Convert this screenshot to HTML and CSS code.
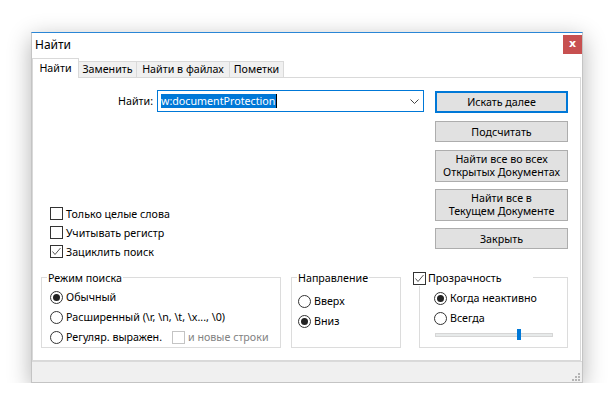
FILE: index.html
```html
<!DOCTYPE html>
<html lang="ru">
<head>
<meta charset="utf-8">
<title>Найти</title>
<link rel="stylesheet" href="styles.css">
</head>
<body>
<div class="window">
  <div class="titlebar">
    <span class="title">Найти</span>
    <div class="close">x</div>
  </div>
  <div class="tabs">
    <div class="tab active t1">Найти</div>
    <div class="tab t2">Заменить</div>
    <div class="tab t3">Найти в файлах</div>
    <div class="tab t4">Пометки</div>
  </div>
  <div class="panel">
    <div class="top">
      <div class="left">
        <div class="find-row">
          <span class="find-label">Найти:</span>
          <div class="combo">
            <span class="sel">w:documentProtection</span><span class="caret"></span>
            <svg class="chev" width="9" height="5" viewBox="0 0 9 5"><polyline points="0.5,0.5 4.5,4.5 8.5,0.5" fill="none" stroke="#444" stroke-width="1"/></svg>
          </div>
        </div>
        <div class="checks">
          <div class="opt"><span class="cb"></span>Только целые слова</div>
          <div class="opt"><span class="cb"></span>Учитывать регистр</div>
          <div class="opt"><span class="cb"><svg width="11" height="11" viewBox="0 0 11 11"><polyline points="1.5,5.5 4,8.5 9.5,2" fill="none" stroke="#555" stroke-width="1"/></svg></span>Зациклить поиск</div>
        </div>
      </div>
      <div class="buttons">
        <div class="btn default">Искать далее</div>
        <div class="btn">Подсчитать</div>
        <div class="btn tall"><span class="line">Найти все во всех</span><span class="line">Открытых Документах</span></div>
        <div class="btn tall"><span class="line">Найти все в</span><span class="line">Текущем Документе</span></div>
        <div class="btn">Закрыть</div>
      </div>
    </div>
    <div class="groups">
      <div class="group g1">
        <div class="gtitle">Режим поиска</div>
        <div class="radios">
          <div class="opt"><span class="radio on"></span>Обычный</div>
          <div class="opt"><span class="radio"></span>Расширенный (\r, \n, \t, \x..., \0)</div>
          <div class="opt"><span class="radio"></span>Регуляр. выражен.<span class="sub disabled"><span class="cb"></span>и новые строки</span></div>
        </div>
      </div>
      <div class="group g2">
        <div class="gtitle">Направление</div>
        <div class="radios">
          <div class="opt"><span class="radio"></span>Вверх</div>
          <div class="opt"><span class="radio on"></span>Вниз</div>
        </div>
      </div>
      <div class="group g3">
        <div class="gtitle"><span class="cb"><svg width="11" height="11" viewBox="0 0 11 11"><polyline points="1.5,5.5 4,8.5 9.5,2" fill="none" stroke="#555" stroke-width="1"/></svg></span>Прозрачность</div>
        <div class="radios">
          <div class="opt"><span class="radio on"></span>Когда неактивно</div>
          <div class="opt"><span class="radio"></span>Всегда</div>
        </div>
        <div class="slider"><div class="track"></div><div class="thumb"></div></div>
      </div>
    </div>
  </div>
  <div class="footer">
    <svg class="grip" width="9" height="9" viewBox="0 0 9 9" fill="#b4b4b4"><rect x="6" y="0" width="2" height="2"/><rect x="3" y="3" width="2" height="2"/><rect x="6" y="3" width="2" height="2"/><rect x="0" y="6" width="2" height="2"/><rect x="3" y="6" width="2" height="2"/><rect x="6" y="6" width="2" height="2"/></svg>
  </div>
</div>
</body>
</html>
```
FILE: styles.css
```css
html, body {
  margin: 0;
  padding: 0;
  background: #ffffff;
}
body {
  font-family: "Noto Sans", "Open Sans", sans-serif;
  font-size: 10.7px;
  color: #000;
  overflow: hidden;
}
.window {
  margin: 32px 0 0 31px;
  width: 552px;
  height: 351px;
  box-sizing: border-box;
  border: 1px solid #c4c4c4;
  border-top-color: #2a86d6;
  background: #fff;
  display: flex;
  flex-direction: column;
  box-shadow: 0 6px 22px rgba(0, 0, 0, 0.3);
}
.titlebar {
  height: 23px;
  flex: none;
  display: flex;
  justify-content: space-between;
  align-items: flex-start;
}
.title {
  font-size: 12px;
  line-height: 16px;
  margin: 4px 0 0 3px;
}
.close {
  width: 19px;
  height: 19px;
  margin-top: 2px;
  background: #c75050;
  color: #fff;
  font: bold 11px/18px "DejaVu Sans", sans-serif;
  text-align: center;
}
.tabs {
  height: 22px;
  flex: none;
  display: flex;
  align-items: flex-end;
  margin-bottom: -1px;
  position: relative;
  z-index: 1;
}
.tab {
  box-sizing: border-box;
  height: 16px;
  margin-bottom: 1px;
  border: 1px solid #d9d9d9;
  border-bottom: none;
  border-left: none;
  background: #f0f0f0;
  line-height: 15px;
  text-align: center;
  white-space: nowrap;
}
.tab.active {
  height: 20px;
  margin-bottom: 0;
  background: #fff;
  border-left: 1px solid #d9d9d9;
  line-height: 18px;
}
.t1 { width: 47px; }
.t2 { width: 58px; }
.t3 { width: 93px; }
.t4 { width: 54px; }
.panel {
  flex: 1;
  box-sizing: border-box;
  border: 1px solid #d9d9d9;
  margin-right: 1px;
}
.top {
  display: flex;
  padding-top: 12px;
}
.left {
  width: 391px;
}
.find-row {
  display: flex;
  align-items: center;
  height: 22px;
}
.find-label {
  width: 120px;
  padding-right: 4px;
  text-align: right;
}
.combo {
  width: 267px;
  height: 22px;
  box-sizing: border-box;
  border: 1px solid #0078d7;
  display: flex;
  align-items: center;
  padding-left: 3px;
}
.sel {
  background: #0078d7;
  color: #fff;
  line-height: 14px;
  height: 14px;
  padding-right: 1px;
  white-space: nowrap;
}
.caret {
  width: 1px;
  height: 14px;
  background: #000;
}
.chev {
  margin-left: auto;
  margin-right: 4px;
}
.checks {
  margin-top: 92px;
  padding-left: 17px;
}
.opt {
  display: flex;
  align-items: center;
  height: 19px;
  white-space: nowrap;
}
.cb {
  width: 13px;
  height: 13px;
  box-sizing: border-box;
  border: 1px solid #333;
  background: #fff;
  margin-right: 3px;
  flex: none;
}
.cb svg {
  display: block;
}
.buttons {
  margin-left: 11px;
  padding-top: 1px;
  width: 133px;
  display: flex;
  flex-direction: column;
  gap: 8px;
}
.btn {
  box-sizing: border-box;
  height: 21px;
  border: 1px solid #adadad;
  background: #e1e1e1;
  display: flex;
  flex-direction: column;
  align-items: center;
  justify-content: center;
  text-align: center;
  white-space: nowrap;
}
.btn .line {
  display: block;
  line-height: 13px;
  height: 13px;
}
.btn.default {
  height: 22px;
  border: 2px solid #0078d7;
}
.btn.tall {
  height: 32px;
  margin-bottom: -1px;
}
.groups {
  display: flex;
  margin-top: 16px;
  padding-left: 8px;
}
.group {
  box-sizing: border-box;
  height: 71px;
  border: 1px solid #dcdcdc;
}
.g1 { width: 240px; margin-right: 10px; }
.g2 { width: 110px; margin-right: 18px; }
.g3 { width: 149px; }
.gtitle {
  display: flex;
  align-items: center;
  width: max-content;
  height: 16px;
  line-height: 16px;
  margin: -8px 0 0 5px;
  padding: 0 1px;
  background: #fff;
}
.g3 .gtitle {
  width: 120px;
  box-sizing: border-box;
  margin-left: -7px;
  padding: 0;
}
.g3 .gtitle .cb {
  margin-right: 2px;
}
.radios .opt {
  height: 20px;
}
.g1 .radios { padding-left: 8px; margin-top: 1px; }
.g2 .radios { padding-left: 6px; margin-top: 5px; }
.g3 .radios { padding-left: 14px; margin-top: 2px; }
.radio {
  width: 13px;
  height: 13px;
  box-sizing: border-box;
  border: 1px solid #333;
  border-radius: 50%;
  background: #fff;
  margin-right: 3px;
  display: flex;
  align-items: center;
  justify-content: center;
  flex: none;
}
.radio.on::after {
  content: "";
  width: 7px;
  height: 7px;
  border-radius: 50%;
  background: #222;
}
.sub {
  display: flex;
  align-items: center;
  margin-left: 10px;
}
.disabled {
  color: #838383;
}
.disabled .cb {
  border-color: #c4c4c4;
}
.slider {
  position: relative;
  width: 118px;
  height: 11px;
  margin: 1px 0 0 15px;
}
.track {
  position: absolute;
  left: 0;
  right: 0;
  top: 4px;
  height: 4px;
  box-sizing: border-box;
  border: 1px solid #d6d6d6;
  background: #e7eaea;
}
.thumb {
  position: absolute;
  left: 82px;
  top: 0;
  width: 4px;
  height: 11px;
  background: #0078d7;
}
.footer {
  height: 21px;
  flex: none;
  box-sizing: border-box;
  border-top: 1px solid #dadada;
  background: #f0f0f0;
  display: flex;
  justify-content: flex-end;
  align-items: flex-end;
}
.grip {
  display: block;
  margin-right: 1px;
}
```
